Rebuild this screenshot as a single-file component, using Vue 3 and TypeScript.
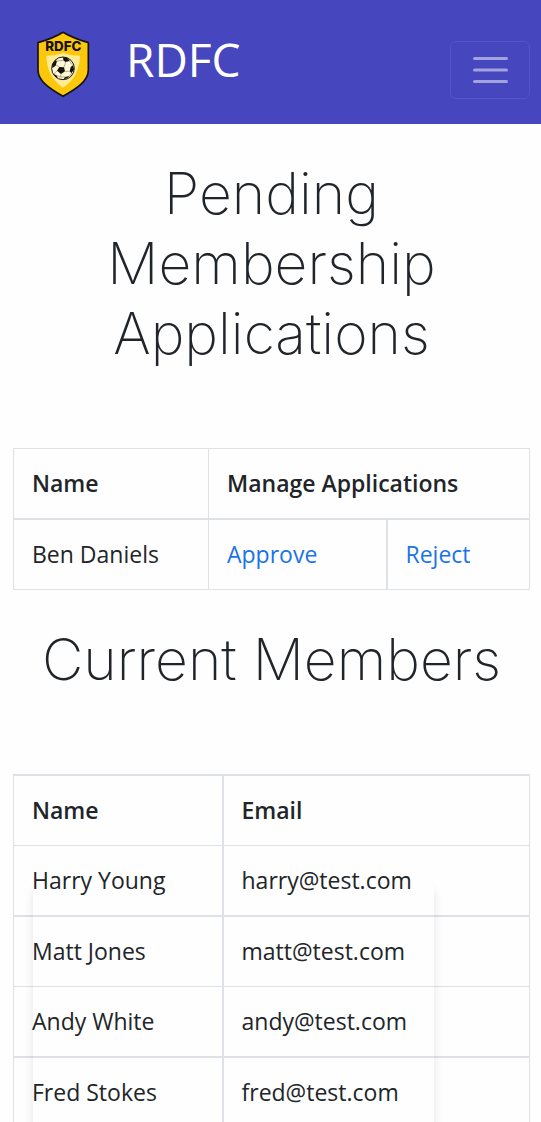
<script setup lang="ts">
interface Member {
  name: string
  email: string
}

const applicants: string[] = ['Ben Daniels']

const members: Member[] = [
  { name: 'Harry Young', email: 'harry@test.com' },
  { name: 'Matt Jones', email: 'matt@test.com' },
  { name: 'Andy White', email: 'andy@test.com' },
  { name: 'Fred Stokes', email: 'fred@test.com' },
]
</script>

<template>
  <div class="page">
    <header class="navbar">
      <a class="brand" href="#">
        <svg class="crest" viewBox="48 33 162 201" aria-hidden="true">
          <path
            d="M129 37 C108 50 83 60 54 68 L54 150 C54 184 91 207 129 229 C168 207 205 184 205 150 L205 68 C176 60 151 50 129 37Z"
            fill="#fdc70c" stroke="#15130c" stroke-width="5" stroke-linejoin="round"
          />
          <path
            d="M129 98 C115 104 99 107 79 107 C80 148 96 181 129 203 C163 181 179 148 180 107 C159 107 143 104 129 98Z"
            fill="#ffeb94"
          />
          <text x="130" y="93" text-anchor="middle" class="crest-text">RDFC</text>
          <circle cx="129" cy="145" r="34" fill="#fff8d6" stroke="#15130c" stroke-width="3" />
          <g fill="#15130c">
            <path d="M118 141 L132 142 L135 154 L123 162 L111 152Z" />
            <path d="M129 112 L143 115 L149 123 L136 126 L130 121Z" />
            <path d="M97 134 L105 121 L111 123 L107 137 L97 144Z" />
            <path d="M159 136 L162 148 L155 160 L149 154 L152 141Z" />
            <path d="M131 178 L135 171 L148 168 L142 175Z" />
            <path d="M101 162 L109 166 L114 175 L107 171Z" />
          </g>
          <path
            d="M118 141 L107 134 M132 142 L137 126 M135 154 L149 154 M123 161 L122 171 L109 166 M112 152 L101 162 M122 171 L135 171 M148 168 L155 159 M111 123 L130 121 M148 123 L158 136"
            fill="none" stroke="#15130c" stroke-width="1"
          />
        </svg>
        <span>RDFC</span>
      </a>
      <button class="toggler" type="button" aria-label="Toggle navigation">
        <svg viewBox="0 0 42 42" aria-hidden="true">
          <path d="M5 9.5H37M5 21H37M5 32.5H37" />
        </svg>
      </button>
    </header>

    <main class="content">
      <section>
        <h1>Pending Membership Applications</h1>
        <table class="applications">
          <colgroup>
            <col class="col-applicant" />
            <col class="col-approve" />
            <col />
          </colgroup>
          <thead>
            <tr>
              <th scope="col">Name</th>
              <th scope="colgroup" colspan="2">Manage Applications</th>
            </tr>
          </thead>
          <tbody>
            <tr v-for="name in applicants" :key="name">
              <td>{{ name }}</td>
              <td class="thick-right"><a href="#">Approve</a></td>
              <td><a href="#">Reject</a></td>
            </tr>
          </tbody>
        </table>
      </section>

      <section class="current">
        <h1>Current Members</h1>
        <table class="members">
          <colgroup>
            <col class="col-member" />
            <col />
          </colgroup>
          <thead>
            <tr>
              <th scope="col">Name</th>
              <th scope="col">Email</th>
            </tr>
          </thead>
          <tbody>
            <tr v-for="member in members" :key="member.email">
              <td>{{ member.name }}</td>
              <td>{{ member.email }}</td>
            </tr>
          </tbody>
        </table>
        <div class="card-shadow"></div>
      </section>
    </main>
  </div>
</template>

<style>
body {
  margin: 0;
  background: #fefefe;
}
</style>

<style scoped>
.page {
  color: #212529;
  font-family: "Open Sans", "Noto Sans", sans-serif;
  font-size: 23px;
  line-height: 34px;
}

.navbar {
  display: flex;
  align-items: center;
  justify-content: space-between;
  box-sizing: border-box;
  height: 124px;
  padding: 0 11px 0 36px;
  background: #4646be;
}

.brand {
  display: flex;
  align-items: center;
  gap: 36px;
  color: #fff;
  font-size: 46px;
  line-height: 62px;
  text-decoration: none;
}

.brand span {
  padding-bottom: 6px;
}

.crest {
  width: 54px;
  height: 67px;
  padding-top: 4px;
}

.crest-text {
  font-family: Inter, "Liberation Sans", sans-serif;
  font-size: 40px;
  font-weight: 800;
  fill: #15130c;
}

.toggler {
  display: flex;
  align-items: center;
  justify-content: center;
  box-sizing: border-box;
  width: 80px;
  height: 58px;
  margin-top: 16px;
  padding: 0;
  border: 1px solid #5656c6;
  border-radius: 6px;
  background: transparent;
}

.toggler svg {
  width: 45px;
  height: 42px;
}

.toggler path {
  fill: none;
  stroke: #a2a2de;
  stroke-width: 3;
  stroke-linecap: round;
}

.content {
  padding: 35px 11px 0 13px;
}

h1 {
  margin: 0 0 79px;
  font-family: Inter, Lato, sans-serif;
  font-size: 57px;
  font-weight: 200;
  line-height: 70px;
  text-align: center;
}

.current {
  position: relative;
  padding-top: 35px;
}

table {
  width: 100%;
  table-layout: fixed;
  border-collapse: collapse;
}

.col-applicant {
  width: 195px;
}

.col-approve {
  width: 178px;
}

.col-member {
  width: 209px;
}

th,
td {
  padding: 18px;
  border: 1px solid #dee2e6;
  line-height: 33px;
  text-align: left;
}

th {
  font-weight: 600;
}

.applications thead th,
.members tbody tr:nth-child(odd) td {
  border-bottom-width: 2px;
}

.applications .thick-right,
.members th:first-child,
.members td:first-child {
  border-right-width: 2px;
}

.members thead th {
  border-top-width: 2px;
}

td a {
  color: #1a73e8;
  text-decoration: none;
}

.card-shadow {
  position: absolute;
  top: 288px;
  right: 96px;
  bottom: 0;
  left: 20px;
  border-radius: 12px 12px 0 0;
  box-shadow: 0 8px 10px rgba(0, 0, 0, 0.1);
  clip-path: inset(-16px -16px 0);
  pointer-events: none;
}
</style>
